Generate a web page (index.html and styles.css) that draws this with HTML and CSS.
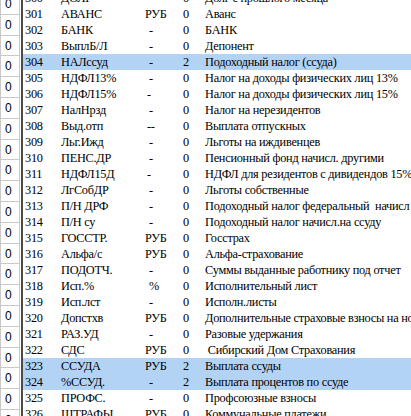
FILE: index.html
```html
<!DOCTYPE html>
<html>
<head>
<meta charset="utf-8">
<link rel="stylesheet" href="styles.css">
</head>
<body>
<div class="screen">
  <div class="side">
    <div class="cell">0</div><div class="cell">0</div><div class="cell">0</div><div class="cell">0</div>
    <div class="cell">0</div><div class="cell">0</div><div class="cell">0</div><div class="cell">0</div>
    <div class="cell">0</div><div class="cell">0</div><div class="cell">0</div><div class="cell">0</div>
    <div class="cell">0</div><div class="cell">0</div><div class="cell">0</div><div class="cell">0</div>
    <div class="cell">0</div><div class="cell">0</div><div class="cell">0</div><div class="cell">0</div>
    <div class="cell">0</div>
  </div>
  <div class="divider"></div>
  <div class="table">
    <div class="row"><span class="num">300</span><span class="code">ДОЛГ</span><span class="cur"></span><span class="cnt">0</span><span class="desc">Долг с прошлого месяца</span></div>
    <div class="row"><span class="num">301</span><span class="code">АВАНС</span><span class="cur">РУБ</span><span class="cnt">0</span><span class="desc">Аванс</span></div>
    <div class="row"><span class="num">302</span><span class="code">БАНК</span><span class="cur dash">-</span><span class="cnt">0</span><span class="desc">БАНК</span></div>
    <div class="row"><span class="num">303</span><span class="code">ВыплБ/Л</span><span class="cur dash">-</span><span class="cnt">0</span><span class="desc">Депонент</span></div>
    <div class="row sel"><span class="num">304</span><span class="code">НАЛссуд</span><span class="cur dash">-</span><span class="cnt">2</span><span class="desc">Подоходный налог (ссуда)</span></div>
    <div class="row"><span class="num">305</span><span class="code">НДФЛ13%</span><span class="cur dash">-</span><span class="cnt">0</span><span class="desc">Налог на доходы физических лиц 13%</span></div>
    <div class="row"><span class="num">306</span><span class="code">НДФЛ15%</span><span class="cur dash2">-</span><span class="cnt">0</span><span class="desc">Налог на доходы физических лиц 15%</span></div>
    <div class="row"><span class="num">307</span><span class="code">НалНрзд</span><span class="cur dash">-</span><span class="cnt">0</span><span class="desc">Налог на нерезидентов</span></div>
    <div class="row"><span class="num">308</span><span class="code">Выд.отп</span><span class="cur dash2">--</span><span class="cnt">0</span><span class="desc">Выплата отпускных</span></div>
    <div class="row"><span class="num">309</span><span class="code">Льг.Ижд</span><span class="cur dash">-</span><span class="cnt">0</span><span class="desc">Льготы на иждивенцев</span></div>
    <div class="row"><span class="num">310</span><span class="code">ПЕНС.ДР</span><span class="cur dash">-</span><span class="cnt">0</span><span class="desc">Пенсионный фонд начисл. другими</span></div>
    <div class="row"><span class="num">311</span><span class="code">НДФЛ15Д</span><span class="cur dash2">-</span><span class="cnt">0</span><span class="desc">НДФЛ для резидентов с дивидендов 15%</span></div>
    <div class="row"><span class="num">312</span><span class="code">ЛгСобДР</span><span class="cur dash">-</span><span class="cnt">0</span><span class="desc">Льготы собственные</span></div>
    <div class="row"><span class="num">313</span><span class="code">П/Н ДРФ</span><span class="cur dash">-</span><span class="cnt">0</span><span class="desc">Подоходный налог федеральный&nbsp; начисл</span></div>
    <div class="row"><span class="num">314</span><span class="code">П/Н су</span><span class="cur dash">-</span><span class="cnt">0</span><span class="desc">Подоходный налог начисл.на ссуду</span></div>
    <div class="row"><span class="num">315</span><span class="code">ГОССТР.</span><span class="cur">РУБ</span><span class="cnt">0</span><span class="desc">Госстрах</span></div>
    <div class="row"><span class="num">316</span><span class="code">Альфа/с</span><span class="cur">РУБ</span><span class="cnt">0</span><span class="desc">Альфа-страхование</span></div>
    <div class="row"><span class="num">317</span><span class="code">ПОДОТЧ.</span><span class="cur dash">-</span><span class="cnt">0</span><span class="desc">Суммы выданные работнику под отчет</span></div>
    <div class="row"><span class="num">318</span><span class="code">Исп.%</span><span class="cur dash">%</span><span class="cnt">0</span><span class="desc">Исполнительный лист</span></div>
    <div class="row"><span class="num">319</span><span class="code">Исп.лст</span><span class="cur dash">-</span><span class="cnt">0</span><span class="desc">Исполн.листы</span></div>
    <div class="row"><span class="num">320</span><span class="code">Допстхв</span><span class="cur">РУБ</span><span class="cnt">0</span><span class="desc">Дополнительные страховые взносы на ноябрь</span></div>
    <div class="row"><span class="num">321</span><span class="code">РАЗ.УД</span><span class="cur dash">-</span><span class="cnt">0</span><span class="desc">Разовые удержания</span></div>
    <div class="row"><span class="num">322</span><span class="code">СДС</span><span class="cur">РУБ</span><span class="cnt">0</span><span class="desc">&nbsp;Сибирский Дом Страхования</span></div>
    <div class="row sel"><span class="num">323</span><span class="code">ССУДА</span><span class="cur">РУБ</span><span class="cnt">2</span><span class="desc">Выплата ссуды</span></div>
    <div class="row sel"><span class="num">324</span><span class="code">%ССУД.</span><span class="cur dash">-</span><span class="cnt">2</span><span class="desc">Выплата процентов по ссуде</span></div>
    <div class="row"><span class="num">325</span><span class="code">ПРОФС.</span><span class="cur dash">-</span><span class="cnt">0</span><span class="desc">Профсоюзные взносы</span></div>
    <div class="row"><span class="num">326</span><span class="code">ШТРАФЫ</span><span class="cur">РУБ</span><span class="cnt">0</span><span class="desc">Коммунальные платежи</span></div>
  </div>
</div>
</body>
</html>
```

FILE: styles.css
```css
html, body {
  margin: 0;
  padding: 0;
  background: #ffffff;
  overflow: hidden;
}
.screen {
  display: flex;
  width: 411px;
  height: 416px;
  overflow: hidden;
  background: #fff;
}
.side {
  width: 18px;
  flex: none;
  border-left: 1px solid #c8c8c8;
  border-right: 1px solid #c8c8c8;
  margin-top: -6px;
  display: flex;
  flex-direction: column;
}
.cell {
  height: 19.8px;
  flex: none;
  border-bottom: 1px solid #c8c8c8;
  font-family: "Liberation Sans", Arial, sans-serif;
  font-size: 12px;
  line-height: 20px;
  color: #000;
  padding-left: 4px;
}
.divider {
  width: 2px;
  flex: none;
  margin-left: 1px;
  background: #4a4a4a;
}
.table {
  flex: 1;
  min-width: 0;
  margin-top: -10px;
  font-family: "Liberation Serif", "Times New Roman", serif;
  font-size: 12.3px;
  letter-spacing: -0.25px;
  color: #000;
}
.row {
  display: flex;
  height: 16px;
  line-height: 16px;
  white-space: nowrap;
}
.row.sel {
  background: #b3d3f5;
}
.num {
  width: 36px;
  padding-left: 2px;
  flex: none;
}
.code {
  width: 84px;
  flex: none;
}
.cur {
  width: 38px;
  flex: none;
}
.cur.dash { padding-left: 4px; width: 34px; }
.cur.dash2 { padding-left: 2px; width: 36px; }
.cnt {
  width: 22px;
  flex: none;
}
.desc {
  flex: none;
}
```
